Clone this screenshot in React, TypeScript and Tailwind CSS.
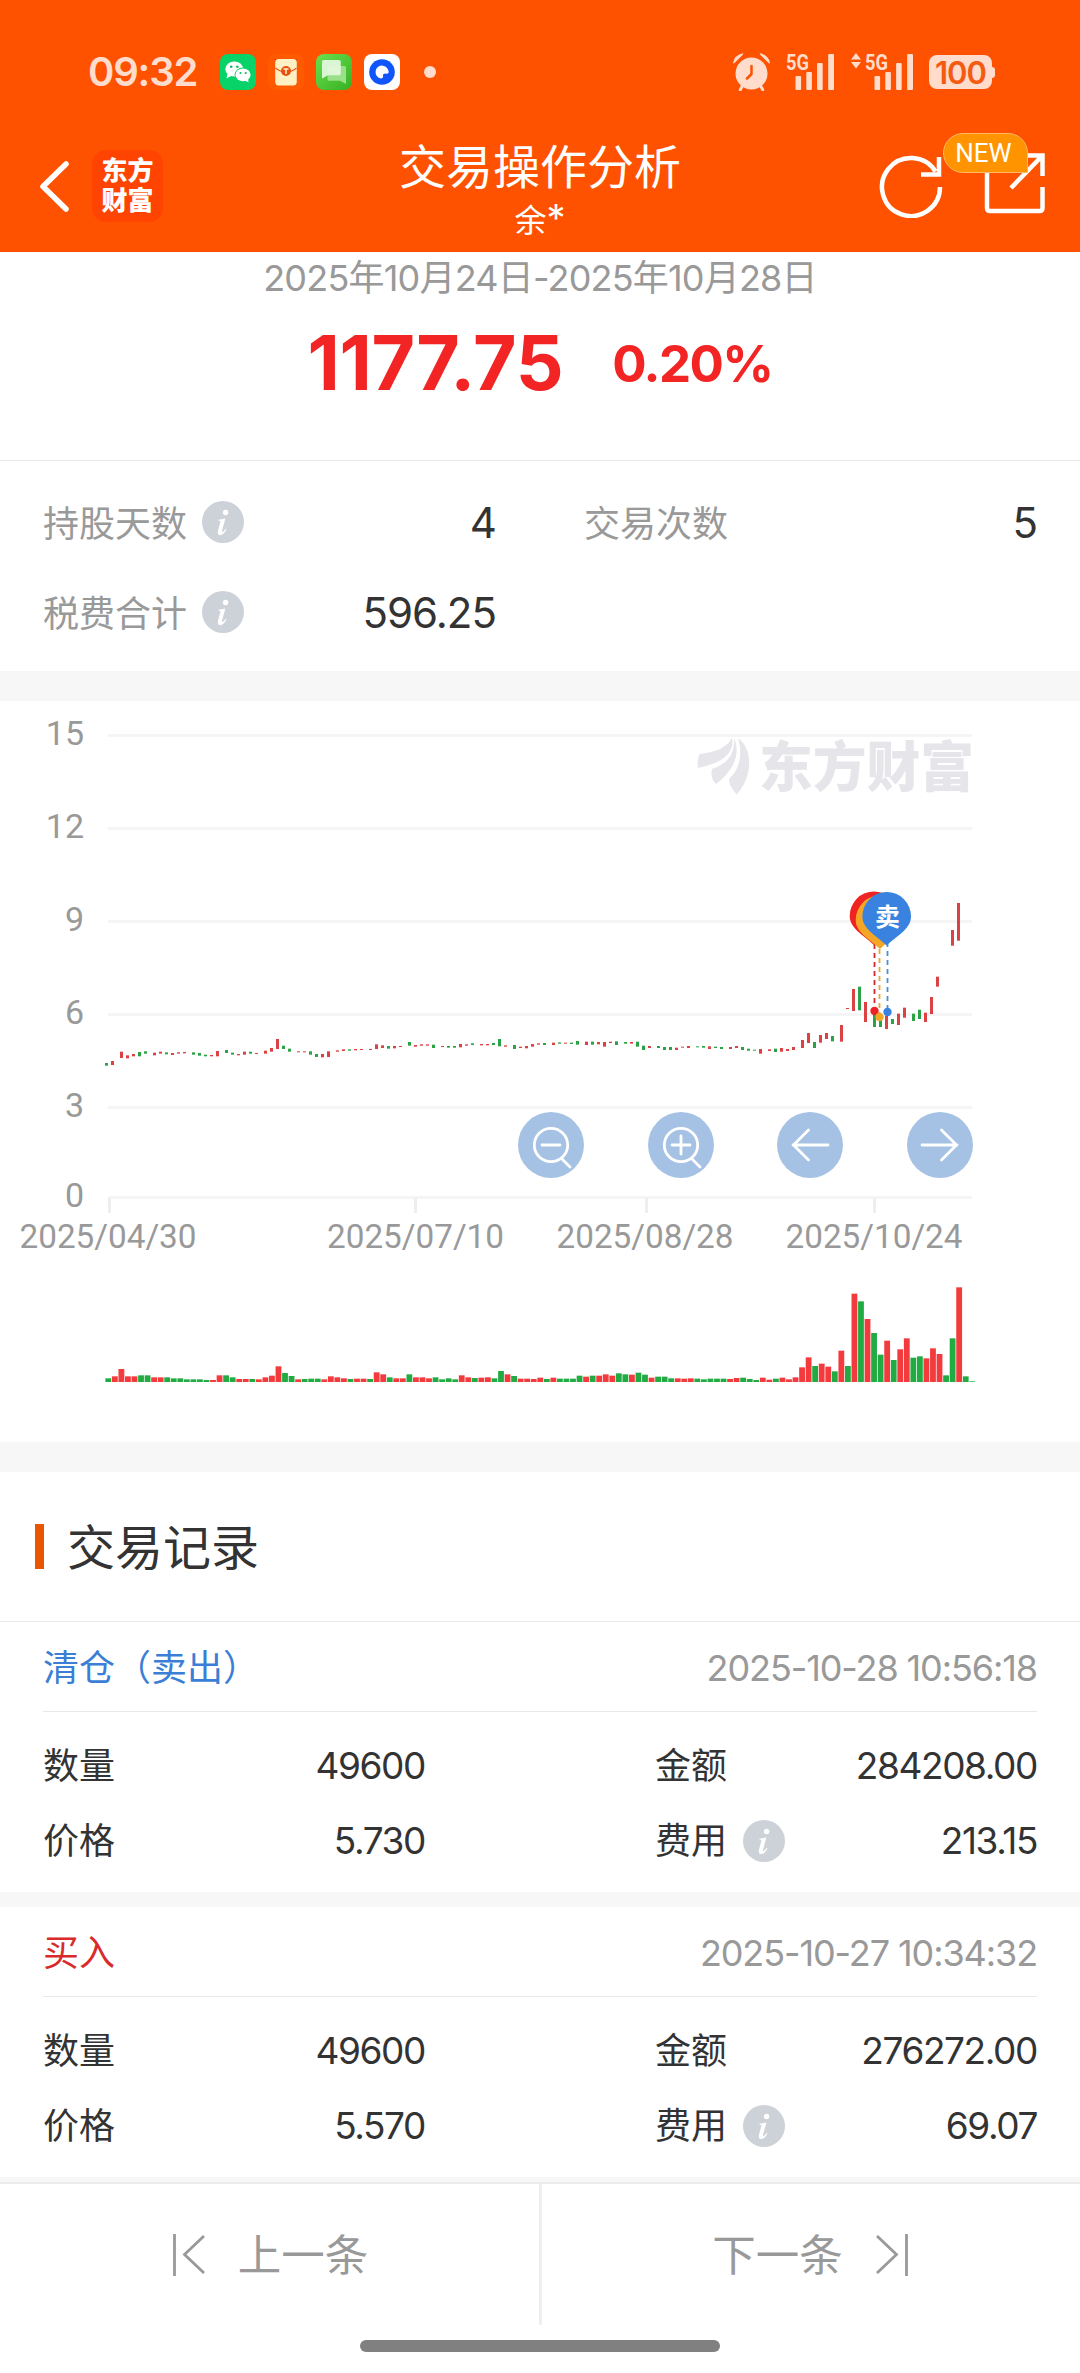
import React from "react";

type Tone = "r" | "g";
type Candle = [Tone, number, number] | null;

const RED = "#dc4144";
const GREEN = "#2ba245";

// Candle bodies: tone, top and bottom in device pixels (3 per css px)
const candles: Candle[] = [
  ["g", 1119, 1127], ["r", 1113, 1125], ["r", 1085, 1104], ["r", 1096, 1105], ["r", 1092, 1099], ["g", 1086, 1099],
  ["g", 1084, 1091], ["r", 1088, 1096], ["r", 1085, 1091], ["g", 1087, 1093], ["r", 1089, 1095], ["r", 1087, 1091],
  ["r", 1086, 1090], ["g", 1087, 1094], ["g", 1089, 1097], ["g", 1094, 1099], ["r", 1095, 1099], ["r", 1083, 1099],
  ["g", 1080, 1089], ["g", 1088, 1094], ["r", 1092, 1096], ["r", 1085, 1094], ["g", 1085, 1091], ["r", 1089, 1092],
  ["r", 1082, 1091], ["r", 1074, 1085], ["r", 1047, 1077], ["g", 1067, 1077], ["g", 1076, 1085], ["r", 1084, 1087],
  ["r", 1084, 1087], ["g", 1084, 1094], ["g", 1092, 1101], ["r", 1092, 1102], ["r", 1084, 1101], ["r", 1081, 1085],
  ["r", 1078, 1083], ["g", 1078, 1082], ["r", 1077, 1081], ["r", 1077, 1080], ["r", 1077, 1080], ["r", 1063, 1077],
  ["r", 1066, 1074], ["g", 1068, 1076], ["r", 1068, 1075], ["r", 1068, 1071], ["g", 1056, 1067], ["r", 1065, 1070],
  ["r", 1063, 1067], ["r", 1063, 1067], ["g", 1064, 1074], ["r", 1068, 1071], ["g", 1068, 1073], ["g", 1068, 1073],
  ["r", 1062, 1072], ["r", 1063, 1067], ["g", 1060, 1065], ["r", 1062, 1066], ["r", 1062, 1066], ["g", 1059, 1065],
  ["g", 1047, 1069], ["r", 1066, 1070], ["g", 1065, 1077], ["r", 1070, 1074], ["r", 1068, 1075], ["r", 1062, 1070],
  ["r", 1060, 1064], ["g", 1059, 1065], ["r", 1058, 1065], ["g", 1057, 1061], ["r", 1058, 1061], ["g", 1058, 1062],
  ["g", 1053, 1064], ["r", 1055, 1065], ["g", 1055, 1064], ["r", 1056, 1063], ["r", 1056, 1070], ["r", 1055, 1059],
  ["g", 1054, 1065], ["g", 1056, 1061], ["r", 1056, 1061], ["g", 1055, 1070], ["g", 1067, 1080], ["r", 1068, 1074],
  ["g", 1068, 1074], ["g", 1071, 1080], ["g", 1071, 1080], ["r", 1073, 1080], ["r", 1070, 1073], ["r", 1068, 1074],
  ["g", 1069, 1072], ["g", 1068, 1073], ["r", 1069, 1077], ["g", 1070, 1074], ["g", 1071, 1077], ["r", 1071, 1077],
  ["r", 1068, 1074], ["g", 1071, 1080], ["g", 1076, 1082], ["g", 1079, 1082], ["r", 1077, 1091], ["r", 1078, 1083],
  ["g", 1076, 1086], ["r", 1074, 1085], ["r", 1077, 1083], ["r", 1071, 1080], ["r", 1050, 1074], ["r", 1029, 1059],
  ["g", 1056, 1074], ["r", 1035, 1058], ["r", 1029, 1047], ["g", 1038, 1054], ["r", 1005, 1055], ["r", 954, 957],
  ["r", 897, 963], ["g", 890, 961], ["r", 936, 996], ["g", 972, 1011], ["g", 990, 1011], ["r", 978, 1017],
  ["g", 987, 1002], ["r", 971, 1005], ["r", 953, 983], ["g", 971, 993], ["g", 959, 987], ["r", 968, 996],
  ["r", 921, 972], ["r", 860, 890], null, ["r", 720, 767], ["r", 639, 752],
];

// Volume bars: tone + height in device pixels
const volumes =
  "g11 r17 r39 r17 r17 g20 g20 r14 r14 g14 g11 g11 g8 g8 g8 g6 r6 r20 g20 g14 r9 r9 g9 r8 r14 r19 r47 g27 g18 r8 " +
  "g9 g10 g10 r8 r17 r14 r11 g9 r10 r10 g9 r29 r23 g14 r11 r11 g23 r14 r14 r11 g14 g8 g11 g8 r20 r14 g12 r13 r14 g11 " +
  "g33 r23 g18 r10 r10 r9 r13 g9 r13 g10 g10 g10 g19 r16 g19 r19 r23 r19 g26 g23 r22 g28 g22 r13 g16 g16 g11 r11 r10 r11 " +
  "g10 g8 g10 g10 g10 r9 r12 g13 g9 g6 r13 r7 g10 r13 r8 r14 r44 r74 g48 r55 r46 g32 r94 g48 r265 g242 r189 g147 g82 r124 " +
  "g66 r98 r131 g73 g77 r71 r101 r84 g20 g131 r284 g17 g2";

const STEP = 6.545;

const yTicks = [
  { label: "15", y: 735.5 },
  { label: "12", y: 828.5 },
  { label: "9", y: 921.5 },
  { label: "6", y: 1014.5 },
  { label: "3", y: 1107.5 },
  { label: "0", y: 1197.5 },
];

const xTicks = [
  { label: "2025/04/30", tick: 109.5, x: 108 },
  { label: "2025/07/10", tick: 415.5, x: 415.5 },
  { label: "2025/08/28", tick: 646.5, x: 645 },
  { label: "2025/10/24", tick: 874.5, x: 874 },
];

const records = [
  { title: "清仓（卖出）", tone: "text-[#3a7fd5]", time: "2025-10-28 10:56:18", qty: "49600", amount: "284208.00", price: "5.730", fee: "213.15" },
  { title: "买入", tone: "text-[#d92b2b]", time: "2025-10-27 10:34:32", qty: "49600", amount: "276272.00", price: "5.570", fee: "69.07" },
];

function InfoIcon() {
  return (
    <svg width="42" height="42" viewBox="0 0 42 42" className="shrink-0">
      <circle cx="21" cy="21" r="21" fill="#cdd1d8" />
      <circle cx="23.6" cy="11.5" r="2.7" fill="#fff" />
      <path d="M16.500 18.800 L23.400 17.400 L20 29.800 Q19.700 31.600 21 30.800 Q22.400 29.800 23.600 27.800 L24.400 28.400 Q21.600 34 18 34.200 Q15 34 16 29.600 L18.400 20.800 Q18.600 19.400 16.500 19.800 Z" fill="#fff" />
    </svg>
  );
}

function Signal() {
  return (
    <svg width="49" height="48" viewBox="0 -5 49 48" fill="#ffdccc">
      <text x="0" y="16.500" fontSize="21.500" fontWeight="700" textLength="23" lengthAdjust="spacingAndGlyphs" fontFamily="Roboto, sans-serif">5G</text>
      <rect x="9.500" y="23" width="5.600" height="14" rx="1" />
      <rect x="20.300" y="19" width="5.600" height="18" rx="1" />
      <rect x="31.100" y="10" width="5.600" height="27" rx="1" />
      <rect x="42.200" y="1" width="5.800" height="36" rx="1" />
    </svg>
  );
}

function StatusBar() {
  return (
    <div className="flex h-[144px] items-center justify-between pr-[85px] pl-[88px]">
      <div className="flex items-center">
        <span className="w-[132px] text-[40px] leading-none font-semibold tracking-[-1.2px] text-[#ffdccc]">09:32</span>
        <div className="flex gap-3">
          <svg width="36" height="36" viewBox="0 0 36 36">
            <rect width="36" height="36" rx="8" fill="#07d368" />
            <ellipse cx="14.3" cy="15" rx="9" ry="7.6" fill="#fff" />
            <path d="M7.5 19.5 L6.5 24.5 L12 21.5Z" fill="#fff" />
            <ellipse cx="23" cy="20.8" rx="8.4" ry="7.2" fill="#07d368" />
            <ellipse cx="23" cy="20.8" rx="7.6" ry="6.4" fill="#fff" />
            <path d="M24 26 L28.5 28.5 L28 24Z" fill="#fff" />
            <g fill="#07c160">
              <circle cx="11.2" cy="12.8" r="1.3" />
              <circle cx="17.4" cy="12.8" r="1.3" />
              <circle cx="20.5" cy="19" r="1.1" />
              <circle cx="25.7" cy="19" r="1.1" />
            </g>
          </svg>
          <svg width="36" height="36" viewBox="0 0 36 36">
            <rect width="36" height="36" rx="8" fill="#ff5a00" />
            <path d="M7 5h22v26H7z" fill="#e84600" />
            <rect x="7.2" y="5" width="21.6" height="26.4" rx="3.5" fill="#fff0c4" />
            <path d="M7.5 14 Q12 18 18 18 Q24 18 28.5 14" stroke="#f0560f" strokeWidth="1.2" fill="none" />
            <circle cx="18" cy="17" r="5" fill="#e8500e" />
            <path d="M15.5 15h5M18 15v5" stroke="#fff0c4" strokeWidth="1.5" />
          </svg>
          <svg width="36" height="36" viewBox="0 0 36 36">
            <defs>
              <linearGradient id="msg" x1="0" y1="0" x2="1" y2="1">
                <stop offset="0" stopColor="#6be04d" />
                <stop offset="1" stopColor="#36b024" />
              </linearGradient>
            </defs>
            <rect width="36" height="36" rx="8" fill="url(#msg)" />
            <path d="M13 12h15.5q1.5 0 1.5 1.5V30l-6-3.3H13q-1.5 0-1.5-1.5V13.5q0-1.5 1.5-1.5z" fill="#9ae08a" />
            <path d="M7.5 6h15.5q1.8 0 1.8 1.8V19.5q0 1.8-1.8 1.8H12L6 24.5V7.5Q6 6 7.5 6z" fill="#e4f8df" fillOpacity=".93" />
          </svg>
          <svg width="36" height="36" viewBox="0 0 36 36">
            <rect width="36" height="36" rx="8" fill="#fff" />
            <circle cx="18" cy="18" r="12.8" fill="#0f55fb" />
            <path d="M24.5 19 A6.5 6.5 0 1 0 17 24.5 Q19.5 24 19 21.5 Q18.8 19.5 21 19.5 Q23.5 20 24.5 19Z" fill="#fff" />
          </svg>
        </div>
        <span className="ml-6 size-3 rounded-full bg-[#ffdccc]" />
      </div>
      <div className="flex items-center">
        <svg width="37" height="38" viewBox="0 0 37 38" className="mr-4">
          <circle cx="18.5" cy="20.5" r="16" fill="#ffdccc" />
          <path d="M0 10 Q1.5 2 10 0.3 Q11 1 8.5 3 L2 9.5 Q.5 11 0 10Z M37 10 Q35.5 2 27 .3 Q26 1 28.5 3 L35 9.5 Q36.5 11 37 10Z" fill="#ffdccc" />
          <path d="M9 33.5 L7.3 36.8 M28 33.5 L29.7 36.8" stroke="#ffdccc" strokeWidth="3" strokeLinecap="round" />
          <path d="M18.5 13 V21 L14 25.5" stroke="#ff5200" strokeWidth="2.5" fill="none" strokeLinecap="round" strokeLinejoin="round" />
        </svg>
        <Signal />
        <svg width="10" height="38" viewBox="0 0 10 38" className="mr-[4px] ml-4">
          <path d="M5 0 L10 6.5 H0Z M0 9 H10 L5 15.5Z" fill="#ffdccc" />
        </svg>
        <Signal />
        <div className="ml-[15px] flex items-center">
          <span className="flex h-[34px] w-[63px] items-center justify-center rounded-lg bg-[#ffdccc] text-[31px] leading-none font-semibold tracking-[-1px] text-[#f45a10]">100</span>
          <span className="h-[11px] w-[3px] rounded-r-sm bg-[#ffdccc]" />
        </div>
      </div>
    </div>
  );
}

function Header() {
  return (
    <header className="h-[252px] shrink-0 bg-[#ff5200] text-white">
      <StatusBar />
      <div className="grid h-[108px] grid-cols-[1fr_auto_1fr] items-start">
        <div className="flex items-center pt-[6px] pl-[38px]">
          <svg width="34" height="56" viewBox="0 0 34 56">
            <path d="M28 6 L5 28.5 L28 51" stroke="#fff" strokeWidth="5.5" fill="none" strokeLinecap="round" strokeLinejoin="round" />
          </svg>
          <div className="ml-5 flex h-[72px] w-[71px] flex-col items-center justify-center rounded-[14px] bg-[#ff4300] text-[26px] leading-[30px] font-black">
            <span>东方</span>
            <span>财富</span>
          </div>
        </div>
        <div className="flex flex-col items-center">
          <h1 className="text-[47px] leading-[46px]">交易操作分析</h1>
          <span className="mt-[8px] text-[32px] leading-[40px]">余<span className="text-[38px]">*</span></span>
        </div>
        <div className="relative flex items-center justify-end gap-[40px] pt-[8px] pr-[32px]">
          <svg width="66" height="66" viewBox="0 0 66 66" fill="none" stroke="#fff" strokeWidth="4.5">
            <path d="M62 35 A29 29 0 1 1 57.5 19.5" />
            <path d="M61 5 V22.5 H43" />
          </svg>
          <svg width="64" height="64" viewBox="0 0 64 64" fill="none" stroke="#fff" strokeWidth="4.5">
            <path d="M3 18 V55 Q3 58 6 58 H55.5 Q58.5 58 58.5 55 V34" />
            <path d="M42 2.5 H58.5 V23 M58 3 L27 35" />
          </svg>
          <span className="absolute top-[-11px] left-[262px] flex h-10 w-[85px] items-center justify-center rounded-[20px] rounded-br-none border border-[#ffb865] bg-[#ff9300] pr-1 [font-family:Roboto,sans-serif] text-[26px] leading-none">NEW</span>
        </div>
      </div>
    </header>
  );
}

function Pin({ x, y, color }: { x: number; y: number; color: string }) {
  return (
    <path
      transform={`translate(${x} ${y})`}
      d="M0 -24.5 A24.3 24.3 0 0 1 24.3 0 C24.3 12 12 18 0 29 C-12 18 -24.3 12 -24.3 0 A24.3 24.3 0 0 1 0 -24.5Z"
      fill={color}
    />
  );
}

const actions = [
  <g key="out"><circle cx="33" cy="33" r="16.7" /><path d="M24 33H42M43.5 46.5L52 55" /></g>,
  <g key="in"><circle cx="33" cy="33" r="16.7" /><path d="M24 33H42M33 24V42M43.5 46.5L52 55" /></g>,
  <path key="prev" d="M51 33H16M31.5 18L16.5 33L31.5 48" />,
  <path key="next" d="M15 33H50M34.5 18L49.5 33L34.5 48" />,
];

function Chart() {
  return (
    <section className="relative h-[741px] shrink-0 bg-white">
      <svg width="1080" height="741" viewBox="0 701 1080 741" className="block">
        {yTicks.map((t) => (
          <g key={t.label}>
            <path d={`M108 ${t.y}H972`} stroke="#f5f5f5" strokeWidth="3" />
            <text x="84" y={t.y + 9} textAnchor="end" fontSize="34" fill="#999" fontFamily="Roboto, sans-serif">{t.label}</text>
          </g>
        ))}
        {xTicks.map((t) => (
          <g key={t.label}>
            <path d={`M${t.tick} 1198V1213`} stroke="#eee" strokeWidth="3" />
            <text x={t.x} y="1248" textAnchor="middle" fontSize="34" textLength="177" lengthAdjust="spacingAndGlyphs" fill="#999" fontFamily="Roboto, sans-serif">{t.label}</text>
          </g>
        ))}

        {/* Watermark */}
        <g fill="#e6e5ea">
          <path d="M698 768 C697 762 698 757 700 754 C714 752 726 749 732 738 C735 753 722 763 698 768Z" />
          <path d="M716 784 C711 779 711 773 712 769 C726 764 735 756 734 738 C741 754 734 770 716 784Z" />
          <path d="M738 738 C747 745 750 755 749 767 C748 778 743 787 737 794.5 C731 788 729 784 729 779 C737 772 744 758 738 738Z" />
          <text x="759" y="786.5" fontSize="54" fontWeight="900" textLength="215" lengthAdjust="spacingAndGlyphs" fontFamily="'Noto Sans CJK SC', sans-serif">东方财富</text>
        </g>

        {candles.map((c, i) => {
          if (!c) return null;
          const x = 105 + 3 * Math.round((i * STEP + 0.75) / 3);
          return <rect key={i} x={x} y={690 + c[1] / 3} width="3" height={Math.max(1, (c[2] - c[1]) / 3)} fill={c[0] === "r" ? RED : GREEN} />;
        })}

        {/* Trade markers */}
        <g strokeWidth="1.8" strokeDasharray="5 4">
          <path d="M874.5 944V1010" stroke="#d3282c" />
          <path d="M879.5 949V1014" stroke="#e5a83a" />
          <path d="M887.5 942V1010" stroke="#4d8fd0" />
        </g>
        <circle cx="874.5" cy="1011" r="4.2" fill="#ee2224" />
        <circle cx="879.5" cy="1017" r="4.2" fill="#f5a623" />
        <circle cx="887.5" cy="1012" r="4.2" fill="#3a82e0" />
        <Pin x={874} y={916} color="#f02323" />
        <Pin x={880} y={920} color="#f5a627" />
        <Pin x={886.7} y={916.5} color="#3a82e0" />
        <text x="887.5" y="926" textAnchor="middle" fontSize="25" fontWeight="700" fill="#fff" fontFamily="'Noto Sans CJK SC', sans-serif">卖</text>

        {volumes.split(" ").map((v, i) => {
          const h = Number(v.slice(1)) / 3;
          return <rect key={i} x={105.4 + i * STEP} y={1382 - h} width="5.8" height={h} fill={v[0] === "r" ? "#f33a3c" : "#22ab43"} />;
        })}
      </svg>
      <div className="absolute top-[411px] left-[518px] flex gap-[63.5px]">
        {actions.map((icon, i) => (
          <button key={i} className="size-[66px] rounded-full bg-[#a5c2e4]">
            <svg width="66" height="66" viewBox="0 0 66 66" fill="none" stroke="#fff" strokeWidth="2.8" strokeLinecap="round">{icon}</svg>
          </button>
        ))}
      </div>
    </section>
  );
}

function Field({ label, value, info = false }: { label: string; value: string; info?: boolean }) {
  return (
    <div className="flex h-[75px] w-[382px] items-center justify-between">
      <span className="flex items-center gap-4">
        {label}
        {info && <InfoIcon />}
      </span>
      <span className="text-[37px] tracking-[-1.4px]">{value}</span>
    </div>
  );
}

export default function App() {
  return (
    <div lang="zh-CN" className="flex h-[2373px] w-[1080px] flex-col overflow-hidden bg-white [font-family:Inter,'Noto_Sans_CJK_SC',sans-serif] text-[36px] leading-none text-[#333]">
      <Header />

      <section className="flex h-[209px] shrink-0 flex-col items-center border-b border-[#e9e9e9] pt-[7px]">
        <p className="text-[36px] leading-[38px] tracking-[-0.8px] text-[#999]">2025年10月24日-2025年10月28日</p>
        <div className="mt-[29px] flex items-center gap-[49px] font-bold text-[#f22424]">
          <span className="text-[75px] leading-[74px] tracking-[-0.3px]">1177.75</span>
          <span className="text-[51px] leading-[51px] tracking-[-1.6px]">0.20%</span>
        </div>
      </section>

      <section className="flex h-[210px] shrink-0 flex-col pt-[16px] text-[#999]">
        <div className="flex h-[90px] items-center px-[43px]">
          <span className="flex w-[453px] items-center justify-between">
            <span className="flex items-center gap-[15px]"><span className="pt-[3px]">持股天数</span><InfoIcon /></span>
            <span className="pt-[2px] text-[42px] tracking-[-1px] text-[#333]">4</span>
          </span>
          <span className="ml-[88px] flex flex-1 items-center justify-between">
            <span className="pt-[3px]">交易次数</span>
            <span className="pt-[2px] text-[42px] tracking-[-1px] text-[#333]">5</span>
          </span>
        </div>
        <div className="flex h-[90px] w-[496px] items-center justify-between pl-[43px]">
          <span className="flex items-center gap-[15px]"><span className="pt-[3px]">税费合计</span><InfoIcon /></span>
          <span className="pt-[2px] text-[42px] tracking-[-1px] text-[#333]">596.25</span>
        </div>
      </section>
      <div className="h-[30px] shrink-0 bg-[#f7f7f7]" />

      <Chart />
      <div className="h-[30px] shrink-0 bg-[#f7f7f7]" />

      <div className="flex h-[150px] shrink-0 items-center border-b border-[#e9e9e9] pl-[35px]">
        <span className="h-[45px] w-[9px] bg-[#ea5504]" />
        <h2 className="ml-[23px] pt-[3px] text-[48px]">交易记录</h2>
      </div>

      {records.map((r) => (
        <React.Fragment key={r.time}>
          <article className="h-[270px] shrink-0 px-[43px]">
            <div className="flex h-[90px] items-center justify-between border-b border-[#e9e9e9] pt-[3px]">
              <span className={r.tone}>{r.title}</span>
              <time className="text-[36px] tracking-[-1.1px] text-[#999]">{r.time}</time>
            </div>
            <div className="grid grid-cols-2 pt-[16px]">
              <Field label="数量" value={r.qty} />
              <div className="flex justify-end"><Field label="金额" value={r.amount} /></div>
              <Field label="价格" value={r.price} />
              <div className="flex justify-end"><Field label="费用" value={r.fee} info /></div>
            </div>
          </article>
          <div className="h-[15px] shrink-0 bg-[#f7f7f7]" />
        </React.Fragment>
      ))}

      <nav className="relative -mt-[10px] flex h-[191px] shrink-0 flex-col border-t-2 border-[#ebebeb] bg-white text-[43.5px] text-[#999]">
        <div className="flex h-[141px]">
          <button className="flex w-[539px] items-center justify-center gap-[33px]">
            <svg width="34" height="44" viewBox="0 0 34 44" fill="none" stroke="#999" strokeWidth="2.8">
              <path d="M3.5 1V43M33 3L13.500 21.500L33 40" />
            </svg>
            <span className="pt-[2px]">上一条</span>
          </button>
          <span className="w-[3px] bg-[#eee]" />
          <button className="flex flex-1 items-center justify-center gap-[33px]">
            <span className="pt-[2px]">下一条</span>
            <svg width="34" height="44" viewBox="0 0 34 44" fill="none" stroke="#999" strokeWidth="2.8">
              <path d="M30.5 1V43M1 3L20.500 21.500L1 40" />
            </svg>
          </button>
        </div>
        <div className="mx-auto mt-[15px] h-3 w-[360px] rounded-full bg-[#808080]" />
      </nav>
    </div>
  );
}
